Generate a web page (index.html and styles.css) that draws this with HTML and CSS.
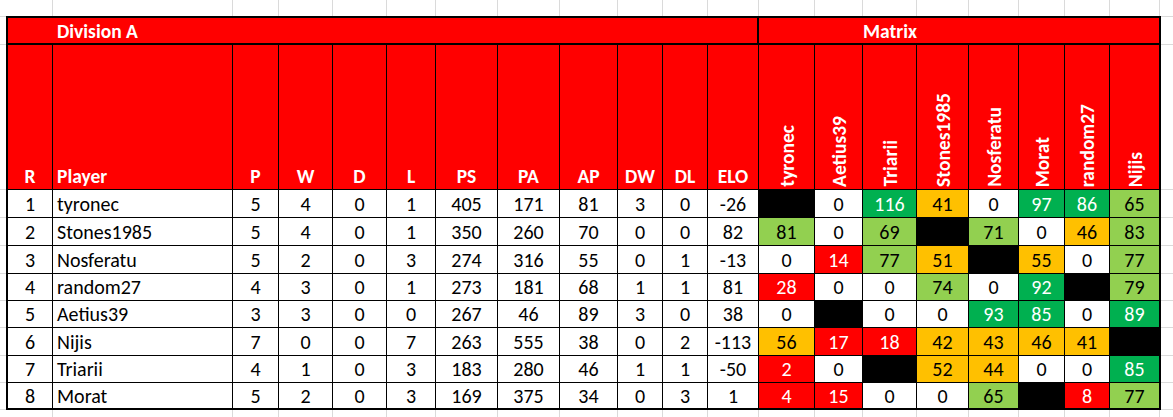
FILE: index.html
```html
<!DOCTYPE html>
<html>
<head>
<meta charset="utf-8">
<link rel="stylesheet" href="styles.css">
</head>
<body>
<div class="sheet">
  <div class="strip top">
    <i></i><i></i><i></i><i></i><i></i><i></i><i></i><i></i><i></i><i></i><i></i><i></i><i></i><i></i><i></i><i></i><i></i><i></i><i></i><i></i>
  </div>
  <div class="mid">
    <div class="gutter left"><i></i><i></i><i></i><i></i><i></i><i></i><i></i><i></i><i></i><i></i></div>
    <div class="tbl">
      <div class="div-a">Division A</div>
      <div class="div-m">Matrix</div>

      <div class="hd">R</div>
      <div class="hd left-t">Player</div>
      <div class="hd">P</div>
      <div class="hd">W</div>
      <div class="hd">D</div>
      <div class="hd">L</div>
      <div class="hd">PS</div>
      <div class="hd">PA</div>
      <div class="hd">AP</div>
      <div class="hd">DW</div>
      <div class="hd">DL</div>
      <div class="hd">ELO</div>
      <div class="hd hv"><span>tyronec</span></div>
      <div class="hd hv"><span>Aetius39</span></div>
      <div class="hd hv"><span>Triarii</span></div>
      <div class="hd hv"><span>Stones1985</span></div>
      <div class="hd hv"><span>Nosferatu</span></div>
      <div class="hd hv"><span>Morat</span></div>
      <div class="hd hv"><span>random27</span></div>
      <div class="hd hv"><span>Nijis</span></div>

      <div class="c">1</div><div class="c nm">tyronec</div><div class="c">5</div><div class="c">4</div><div class="c">0</div><div class="c">1</div><div class="c">405</div><div class="c">171</div><div class="c">81</div><div class="c">3</div><div class="c">0</div><div class="c">-26</div>
      <div class="c k"></div><div class="c">0</div><div class="c g">116</div><div class="c o">41</div><div class="c">0</div><div class="c g">97</div><div class="c g">86</div><div class="c lg">65</div>

      <div class="c">2</div><div class="c nm">Stones1985</div><div class="c">5</div><div class="c">4</div><div class="c">0</div><div class="c">1</div><div class="c">350</div><div class="c">260</div><div class="c">70</div><div class="c">0</div><div class="c">0</div><div class="c">82</div>
      <div class="c lg">81</div><div class="c">0</div><div class="c lg">69</div><div class="c k"></div><div class="c lg">71</div><div class="c">0</div><div class="c o">46</div><div class="c lg">83</div>

      <div class="c">3</div><div class="c nm">Nosferatu</div><div class="c">5</div><div class="c">2</div><div class="c">0</div><div class="c">3</div><div class="c">274</div><div class="c">316</div><div class="c">55</div><div class="c">0</div><div class="c">1</div><div class="c">-13</div>
      <div class="c">0</div><div class="c r">14</div><div class="c lg">77</div><div class="c o">51</div><div class="c k"></div><div class="c o">55</div><div class="c">0</div><div class="c lg">77</div>

      <div class="c">4</div><div class="c nm">random27</div><div class="c">4</div><div class="c">3</div><div class="c">0</div><div class="c">1</div><div class="c">273</div><div class="c">181</div><div class="c">68</div><div class="c">1</div><div class="c">1</div><div class="c">81</div>
      <div class="c r">28</div><div class="c">0</div><div class="c">0</div><div class="c lg">74</div><div class="c">0</div><div class="c g">92</div><div class="c k"></div><div class="c lg">79</div>

      <div class="c">5</div><div class="c nm">Aetius39</div><div class="c">3</div><div class="c">3</div><div class="c">0</div><div class="c">0</div><div class="c">267</div><div class="c">46</div><div class="c">89</div><div class="c">3</div><div class="c">0</div><div class="c">38</div>
      <div class="c">0</div><div class="c k"></div><div class="c">0</div><div class="c">0</div><div class="c g">93</div><div class="c g">85</div><div class="c">0</div><div class="c g">89</div>

      <div class="c">6</div><div class="c nm">Nijis</div><div class="c">7</div><div class="c">0</div><div class="c">0</div><div class="c">7</div><div class="c">263</div><div class="c">555</div><div class="c">38</div><div class="c">0</div><div class="c">2</div><div class="c">-113</div>
      <div class="c o">56</div><div class="c r">17</div><div class="c r">18</div><div class="c o">42</div><div class="c o">43</div><div class="c o">46</div><div class="c o">41</div><div class="c k"></div>

      <div class="c">7</div><div class="c nm">Triarii</div><div class="c">4</div><div class="c">1</div><div class="c">0</div><div class="c">3</div><div class="c">183</div><div class="c">280</div><div class="c">46</div><div class="c">1</div><div class="c">1</div><div class="c">-50</div>
      <div class="c r">2</div><div class="c">0</div><div class="c k"></div><div class="c o">52</div><div class="c o">44</div><div class="c">0</div><div class="c">0</div><div class="c g">85</div>

      <div class="c">8</div><div class="c nm">Morat</div><div class="c">5</div><div class="c">2</div><div class="c">0</div><div class="c">3</div><div class="c">169</div><div class="c">375</div><div class="c">34</div><div class="c">0</div><div class="c">3</div><div class="c">1</div>
      <div class="c r">4</div><div class="c r">15</div><div class="c">0</div><div class="c">0</div><div class="c lg">65</div><div class="c k"></div><div class="c r">8</div><div class="c lg">77</div>
    </div>
    <div class="gutter right"><i></i><i></i><i></i><i></i><i></i><i></i><i></i><i></i><i></i><i></i></div>
  </div>
  <div class="strip bottom">
    <i></i><i></i><i></i><i></i><i></i><i></i><i></i><i></i><i></i><i></i><i></i><i></i><i></i><i></i><i></i><i></i><i></i><i></i><i></i><i></i>
  </div>
</div>
</body>
</html>
```

FILE: styles.css
```css
:root {
  --cols: 44px 179px 45px 53px 53px 48px 61px 61px 57px 44px 44px 50px 55px 47px 53px 51px 49px 45px 44px 49px;
  --grid: #dadada;
}

* { box-sizing: border-box; }

html, body {
  margin: 0;
  padding: 0;
  background: #ffffff;
}

body {
  font-family: Calibri, Carlito, Lato, "Liberation Sans", sans-serif;
  font-size: 19.5px;
  color: #000000;
  width: 1173px;
  height: 417px;
  overflow: hidden;
}

.sheet {
  display: flex;
  flex-direction: column;
}

.strip {
  display: grid;
  grid-template-columns: var(--cols);
  column-gap: 1px;
  background: var(--grid);
  margin-left: 8px;
  padding-right: 1px;
  width: 1152px;
}
.strip i { background: #ffffff; display: block; }
.strip.top { height: 16px; }
.strip.bottom { height: 7px; }

.mid {
  display: flex;
}

.gutter {
  display: grid;
  grid-template-rows: 27px 144px 27px 27px 27px 26px 26px 27px 26px 26px;
  row-gap: 1px;
  padding: 1px 0;
  background: var(--grid);
}
.gutter i { background: #ffffff; display: block; }
.gutter.left { width: 6px; }
.gutter.right { width: 12px; }

.tbl {
  display: grid;
  grid-template-columns: var(--cols);
  grid-template-rows: 26px 144px 27px 27px 27px 26px 26px 27px 26px 25px;
  gap: 1px;
  padding: 2px;
  background: #000000;
  width: 1155px;
}

.div-a, .div-m {
  background: #ff0000;
  color: #ffffff;
  font-weight: bold;
  border-bottom: 1px solid #000000;
  display: flex;
  align-items: center;
}
.div-a {
  grid-column: 1 / 13;
  padding-left: 49px;
  border-right: 1px solid #000000;
}
.div-m {
  grid-column: 13 / 21;
  padding-left: 104px;
}

.hd {
  background: #ff0000;
  color: #ffffff;
  font-weight: bold;
  display: flex;
  align-items: flex-end;
  justify-content: center;
  padding-bottom: 1px;
}
.hd.left-t {
  justify-content: flex-start;
  padding-left: 4px;
}
.hv {
  flex-direction: column;
  align-items: center;
  justify-content: flex-end;
  padding-bottom: 2px;
}
.hv span {
  writing-mode: vertical-rl;
  transform: rotate(180deg);
  white-space: nowrap;
}

.c {
  background: #ffffff;
  display: flex;
  align-items: center;
  justify-content: center;
  white-space: nowrap;
  font-size: 20px;
}
.c.nm {
  justify-content: flex-start;
  padding-left: 4px;
}
.k { background: #000000; }
.g { background: #00b050; color: #ffffff; }
.lg { background: #92d050; }
.o { background: #ffc000; }
.r { background: #ff0000; color: #ffffff; }
```
